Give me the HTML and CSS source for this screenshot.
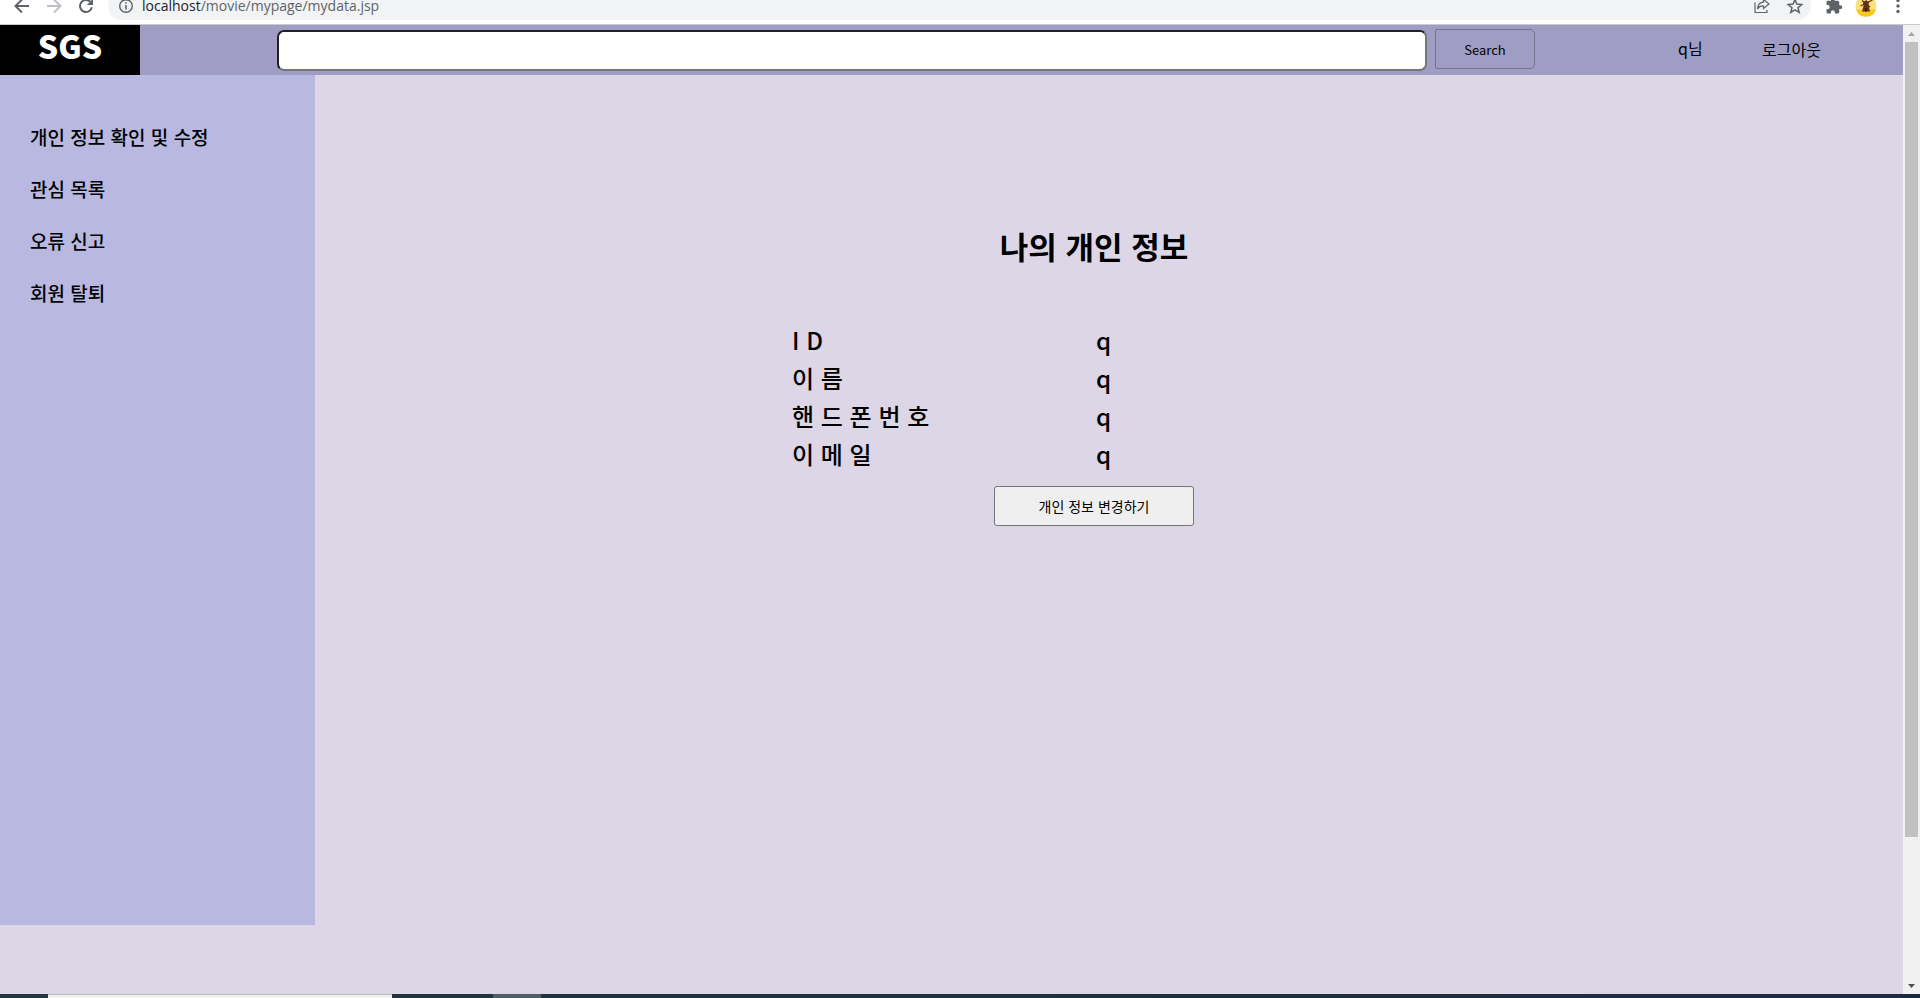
FILE: index.html
```html
<!DOCTYPE html>
<html lang="ko">
<head>
<meta charset="utf-8">
<title>SGS - 나의 개인 정보</title>
<link rel="stylesheet" href="styles.css">
</head>
<body>
<div class="toolbar">
  <div class="nav">
    <button class="icon-button" aria-label="뒤로"><svg width="18" height="18" viewBox="0 0 18 18"><path d="M16 9H3M9 2.500L2.500 9L9 15.500" fill="none" stroke="#5f6368" stroke-width="2"/></svg></button>
    <button class="icon-button" aria-label="앞으로"><svg width="18" height="18" viewBox="0 0 18 18"><path d="M2 9H15M9 2.500L15.500 9L9 15.500" fill="none" stroke="#bdc1c6" stroke-width="2"/></svg></button>
    <button class="icon-button" aria-label="새로고침"><svg width="18" height="18" viewBox="0 0 18 18"><path d="M14.900 10.300A6 6 0 1 1 13.400 4.900" fill="none" stroke="#5f6368" stroke-width="2"/><path d="M16 1.800V8H9.800Z" fill="#5f6368"/></svg></button>
  </div>
  <div class="address">
    <svg width="16" height="16" viewBox="0 0 16 16"><circle cx="8" cy="8" r="6.300" fill="none" stroke="#5f6368" stroke-width="1.400"/><path d="M8 7v4.500M8 4.300v1.500" stroke="#5f6368" stroke-width="1.600"/></svg>
    <span class="url"><span class="host">localhost</span>/movie/mypage/mydata.jsp</span>
    <svg class="share" width="18" height="18" viewBox="0 0 18 18"><path d="M2 5.500V15.500H14V13M10.500 2.500L16 7L10.500 11.500V9Q6.500 8.700 4.500 12Q5 5.500 10.500 5.200Z" fill="none" stroke="#5f6368" stroke-width="1.200"/></svg>
    <svg width="18" height="18" viewBox="0 0 18 18"><path d="M9 2.500L10.900 7.100L15.800 7.500L12 10.700L13.200 15.500L9 12.900L4.800 15.500L6 10.700L2.200 7.500L7.100 7.100Z" fill="none" stroke="#5f6368" stroke-width="1.500"/></svg>
  </div>
  <div class="tools">
    <svg width="18" height="18" viewBox="0 0 24 24"><path fill="#5f6368" d="M20.500 11H19V7c0-1.100-.9-2-2-2h-4V3.500a2.500 2.500 0 0 0-5 0V5H4c-1.100 0-2 .9-2 2v3.800h1.500a2.700 2.700 0 0 1 0 5.400H2V20c0 1.100.9 2 2 2h3.800v-1.500a2.700 2.700 0 0 1 5.400 0V22H17c1.100 0 2-.9 2-2v-4h1.500a2.500 2.500 0 0 0 0-5z"/></svg>
    <svg width="22" height="22" viewBox="0 0 22 22"><circle cx="11" cy="11" r="10.500" fill="#f9e27c"/><path d="M1 14.500H21A10.500 10.500 0 0 1 1 14.500Z" fill="#fbc919"/><path d="M8 7.500L11 5L14 7.500L13.500 10L15 16.500H7L8.500 11Z" fill="#6a3214"/><path d="M5.500 11L17.500 5M7 5.500L15 12" stroke="#6a3214" stroke-width="1.300"/><path d="M10 13.500h2v3h-2z" fill="#34190d"/></svg>
    <svg width="18" height="18" viewBox="0 0 18 18" fill="#5f6368"><circle cx="9" cy="3.500" r="1.700"/><circle cx="9" cy="9" r="1.700"/><circle cx="9" cy="14.500" r="1.700"/></svg>
  </div>
</div>
<div class="viewport">
  <div class="page">
    <header class="header">
      <a class="logo" href="#">SGS</a>
      <form class="search">
        <input class="search-input" type="text" aria-label="Search">
        <button class="search-button" type="button">Search</button>
      </form>
      <div class="account">
        <a href="#">q님</a>
        <a class="logout" href="#">로그아웃</a>
      </div>
    </header>
    <div class="content">
      <nav class="sidebar">
        <a href="#">개인 정보 확인 및 수정</a>
        <a href="#">관심 목록</a>
        <a href="#">오류 신고</a>
        <a href="#">회원 탈퇴</a>
      </nav>
      <main class="main">
        <h1>나의 개인 정보</h1>
        <table class="info">
          <tr><th scope="row">I D</th><td>q</td></tr>
          <tr><th scope="row">이 름</th><td>q</td></tr>
          <tr><th scope="row">핸 드 폰 번 호</th><td>q</td></tr>
          <tr><th scope="row">이 메 일</th><td>q</td></tr>
        </table>
        <button class="edit" type="button">개인 정보 변경하기</button>
      </main>
    </div>
  </div>
  <div class="scrollbar">
    <svg width="17" height="17" viewBox="0 0 17 17"><path d="M5 11L8.500 7L12 11Z" fill="#a3a3a3"/></svg>
    <div class="track"><div class="thumb"></div></div>
    <svg width="17" height="17" viewBox="0 0 17 17"><path d="M5 7L8.500 11L12 7Z" fill="#505050"/></svg>
  </div>
</div>
<div class="taskbar"><div class="task-search"></div><div class="task-active"></div></div>
</body>
</html>
```
FILE: styles.css
```css
* { box-sizing: border-box; }
body {
  margin: 0;
  height: 100vh;
  display: flex;
  flex-direction: column;
  overflow: hidden;
  color: #000;
  font-family: "Noto Sans CJK KR", sans-serif;
  font-weight: 500;
}
a { color: inherit; text-decoration: none; }
button, input { font-family: inherit; }
svg { display: block; flex: none; }

.toolbar {
  flex: none;
  height: 25px;
  padding-bottom: 4px;
  border-bottom: 1px solid #c9c9cf;
  display: flex;
  align-items: flex-end;
  overflow: hidden;
  background: #fff;
}
.nav, .tools { height: 28px; display: flex; align-items: center; }
.nav { padding: 0 13px; gap: 14px; }
.icon-button { padding: 0; border: 0; background: none; }
.address {
  flex: 1;
  height: 28px;
  padding: 0 7px 0 10px;
  border-radius: 14px;
  background: #f1f3f4;
  display: flex;
  align-items: center;
  gap: 8px;
}
.url {
  flex: 1;
  color: #5f6368;
  font: 400 14px/12px "Open Sans", sans-serif;
}
.host { color: #202124; }
.share { margin-right: 7px; }
.tools { padding: 0 13px 0 14px; gap: 12px; }

.viewport { flex: 1; min-height: 0; display: flex; }
.page { flex: 1; background: #dcd6e7; }
.header {
  height: 50px;
  display: flex;
  background: #9f9dc3;
}
.logo {
  width: 140px;
  background: #000;
  color: #fff;
  text-align: center;
  font-size: 32px;
  font-weight: 900;
  line-height: 40px;
}
.search {
  flex: 1;
  margin-left: 137px;
  padding-top: 4px;
  display: flex;
  gap: 8px;
}
.search-input {
  flex: 1;
  height: 41px;
  margin-top: 1px;
  border: 2px inset #767676;
  border-radius: 7px;
  background: #fff;
}
.search-button {
  width: 100px;
  height: 40px;
  border: 1px solid #767688;
  border-radius: 2px 5px 5px 2px;
  background: transparent;
  color: #000;
  font-size: 13px;
  font-weight: 400;
}
.account {
  width: 368px;
  padding: 0 82px 0 143px;
  display: flex;
  justify-content: space-between;
  font-size: 16px;
  font-weight: 400;
  line-height: 46px;
}
.logout { line-height: 48px; }

.content { display: flex; align-items: flex-start; }
.sidebar {
  width: 315px;
  height: 850px;
  padding: 36px 30px;
  display: flex;
  flex-direction: column;
  background: #b9b8e0;
  font-size: 19px;
  line-height: 52px;
}
.main {
  flex: 1;
  padding: 147px 30px 0 0;
  display: flex;
  flex-direction: column;
  align-items: center;
}
h1 { margin: 0 0 51px; font-size: 31px; line-height: 48px; }
.info {
  width: 604px;
  margin-bottom: 13px;
  border-collapse: collapse;
  font-size: 24px;
  line-height: 38px;
}
.info th, .info td { padding: 0; text-align: left; font-weight: 500; }
.info th { width: 304px; }
.edit {
  width: 200px;
  height: 40px;
  border: 1px solid #767676;
  border-radius: 3px;
  background: #efefef;
  color: #000;
  font-size: 14px;
  font-weight: 400;
}

.scrollbar {
  width: 17px;
  background: #f1f1f1;
  display: flex;
  flex-direction: column;
}
.track { flex: 1; padding: 0 2px; }
.thumb { height: 85%; background: #c1c1c1; }

.taskbar {
  flex: none;
  height: 4px;
  padding-left: 48px;
  display: flex;
  gap: 101px;
  background: linear-gradient(90deg, #213740, #1b2c3f);
}
.task-search { width: 344px; border-top: 1px solid #bbb; background: #f2f2f2; }
.task-active { width: 48px; background: #4d5f67; }
```
